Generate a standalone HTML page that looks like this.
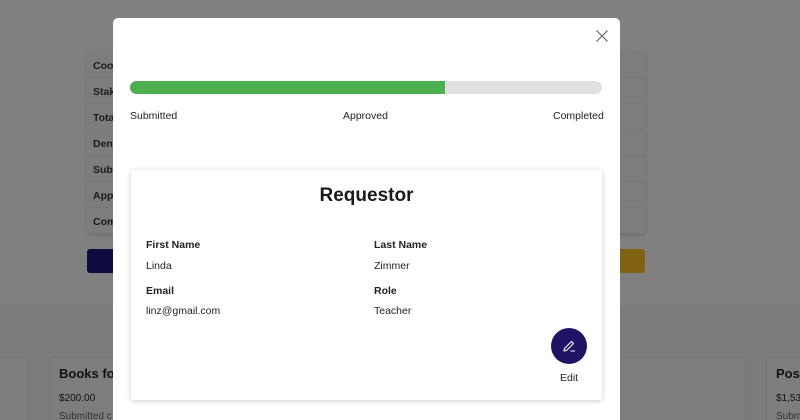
<!DOCTYPE html>
<html><head><style>
*{margin:0;padding:0;box-sizing:border-box}
html,body{width:800px;height:420px;overflow:hidden}
body{background:#808080;font-family:"Liberation Sans",Arial,sans-serif;position:relative;color:#222}
.abs{position:absolute}
.lower{left:0;top:305px;width:800px;height:115px;background:#7b7b7b}
.tbl{left:87px;top:52px;width:558px;height:181px;background:#7d7d7d;box-shadow:0 2px 5px rgba(0,0,0,.15);border-radius:3px}
.row{height:26px;border-bottom:1px solid #777;font-size:10.5px;font-weight:bold;padding:8px 6px;color:#1a1a1a}
.bg-card{background:#7d7d7d;border:1px solid #767676;border-radius:4px}
.modal{left:113px;top:18px;width:507px;height:402px;background:#fff;border-radius:5px 5px 0 0}
.lbl{font-size:10.5px;color:#222}
.card{left:131px;top:170px;width:471px;height:230px;background:#fff;border-radius:3px;box-shadow:0 1px 6px rgba(0,0,0,.2)}
.fl{font-size:10.5px;font-weight:bold;color:#222}
.fv{font-size:10.5px;color:#222}
</style></head><body>
<div class="abs lower"></div>
<div class="abs tbl">
<div class="row">Coor</div><div class="row">Stak</div><div class="row">Tota</div><div class="row">Deni</div><div class="row">Subr</div><div class="row">Appr</div><div class="row" style="border:none">Com</div>
</div>
<div class="abs" style="left:87px;top:249px;width:40px;height:24px;background:#0e0c3e;border-radius:3px"></div>
<div class="abs" style="left:600px;top:249px;width:45px;height:24px;background:#806212;border-radius:3px"></div>
<div class="abs bg-card" style="left:-5px;top:357px;width:33px;height:70px"></div>
<div class="abs bg-card" style="left:49px;top:357px;width:80px;height:70px"></div>
<div class="abs" style="left:59px;top:366px;font-size:13px;font-weight:bold;color:#111">Books for</div>
<div class="abs" style="left:59px;top:393px;font-size:10px;color:#111">$200.00</div>
<div class="abs" style="left:59px;top:411px;font-size:10px;color:#333">Submitted c</div>
<div class="abs bg-card" style="left:600px;top:357px;width:145px;height:70px"></div>
<div class="abs bg-card" style="left:766px;top:357px;width:50px;height:70px"></div>
<div class="abs" style="left:776px;top:366px;font-size:13px;font-weight:bold;color:#111">Post</div>
<div class="abs" style="left:776px;top:393px;font-size:10px;color:#111">$1,53</div>
<div class="abs" style="left:776px;top:411px;font-size:10px;color:#333">Subm</div>

<div class="abs modal"></div>
<svg class="abs" style="left:596px;top:30px" width="12" height="12" viewBox="0 0 12 12"><path d="M0.5 0.5L11.5 11.5M11.5 0.5L0.5 11.5" stroke="#666" stroke-width="1.2"/></svg>
<div class="abs" style="left:130px;top:81px;width:472px;height:13px;background:#e0e0e0;border-radius:7px"></div>
<div class="abs" style="left:130px;top:81px;width:315px;height:13px;background:#4caf50;border-radius:7px 0 0 7px"></div>
<div class="abs lbl" style="left:130px;top:110px">Submitted</div>
<div class="abs lbl" style="left:343px;top:110px">Approved</div>
<div class="abs lbl" style="left:553px;top:110px">Completed</div>
<div class="abs card"></div>
<div class="abs" style="left:131px;top:185px;width:471px;text-align:center;font-size:19px;font-weight:bold;color:#1a1a1a">Requestor</div>
<div class="abs fl" style="left:146px;top:239px">First Name</div>
<div class="abs fv" style="left:146px;top:260px">Linda</div>
<div class="abs fl" style="left:146px;top:285px">Email</div>
<div class="abs fv" style="left:146px;top:305px">linz@gmail.com</div>
<div class="abs fl" style="left:374px;top:239px">Last Name</div>
<div class="abs fv" style="left:374px;top:260px">Zimmer</div>
<div class="abs fl" style="left:374px;top:285px">Role</div>
<div class="abs fv" style="left:374px;top:305px">Teacher</div>
<div class="abs" style="left:551px;top:328px;width:36px;height:36px;border-radius:50%;background:#1f1466"></div>
<svg class="abs" style="left:561px;top:338px" width="16" height="16" viewBox="0 0 16 16"><path d="M3 13L3.5 10.5L10.5 3.5L12.5 5.5L5.5 12.5Z M9.5 13H14" fill="none" stroke="#fff" stroke-width="1.1" stroke-linejoin="round"/></svg>
<div class="abs fv" style="left:560px;top:372px">Edit</div>
</body></html>
